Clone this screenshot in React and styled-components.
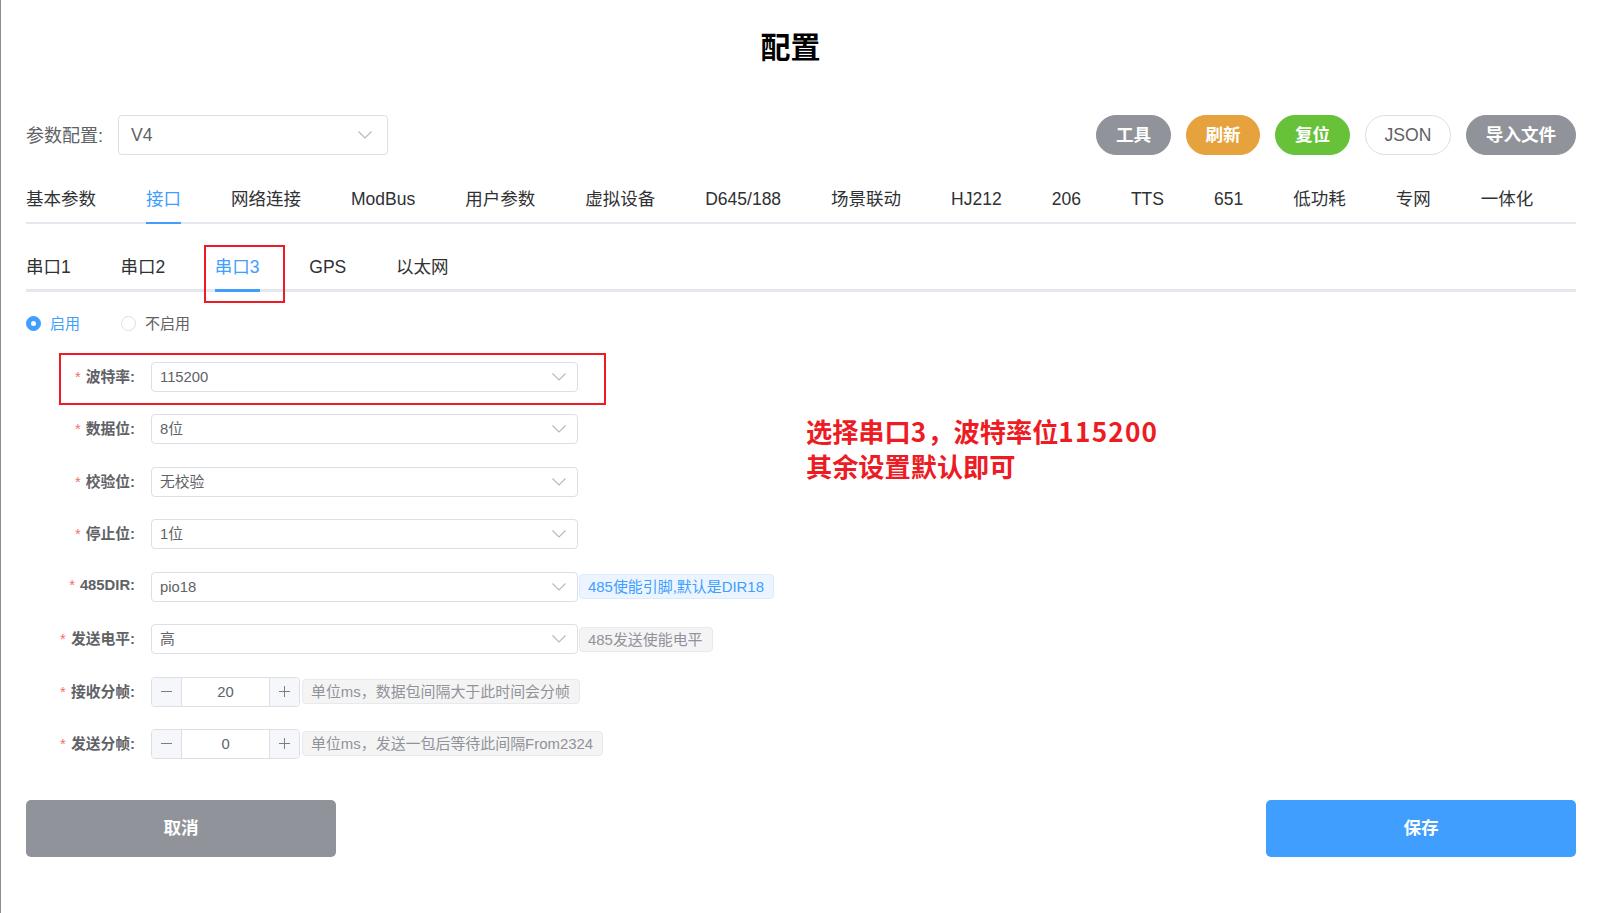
import React from "react";
import styled, { createGlobalStyle } from "styled-components";

const GlobalStyle = createGlobalStyle`
  html, body {
    margin: 0;
    padding: 0;
    background: #fff;
  }
  body {
    font-family: "Liberation Sans", "Noto Sans CJK SC", sans-serif;
    overflow: hidden;
  }
  * {
    box-sizing: border-box;
  }
`;

const Page = styled.div`
  position: relative;
  height: 913px;
  padding: 0 25px;
  border-left: 1px solid #8a8d92;
  background: #fff;
`;

const Title = styled.h1`
  margin: 0;
  height: 94px;
  padding-right: 21px;
  font-size: 30px;
  line-height: 96px;
  font-weight: 700;
  text-align: center;
  color: #000;
`;

const Toolbar = styled.div`
  display: flex;
  align-items: center;
  justify-content: space-between;
  margin-top: 21px;
  height: 40px;
`;

const ConfigPicker = styled.div`
  display: flex;
  align-items: center;
  gap: 15px;
  font-size: 18px;
  color: #606266;
`;

const PickerLabel = styled.span`
  padding-bottom: 3px;
`;

const ActionGroup = styled.div`
  display: flex;
  gap: 15px;
`;

const PillButton = styled.button`
  width: ${(p) => p.$width}px;
  height: 40px;
  padding: 0 0 ${(p) => p.$pad ?? 3}px;
  border: 1px solid ${(p) => p.$border || p.$bg};
  border-radius: 20px;
  background: ${(p) => p.$bg};
  color: ${(p) => p.$color || "#fff"};
  font: ${(p) => p.$weight || 700} 17.6px "Liberation Sans", "Noto Sans CJK SC", sans-serif;
`;

const SelectBox = styled.div`
  display: flex;
  align-items: center;
  justify-content: space-between;
  width: ${(p) => (p.$large ? 270 : 427)}px;
  height: ${(p) => (p.$large ? 40 : 30)}px;
  padding: 0 ${(p) => (p.$large ? 15 : 11)}px 0 ${(p) => (p.$large ? 12 : 8)}px;
  border: 1px solid #dcdfe6;
  border-radius: 4px;
  background: #fff;
  color: #606266;
  font-size: ${(p) => (p.$large ? 17.6 : 14.8)}px;
`;

const SelectValue = styled.span`
  padding-bottom: ${(p) => (p.$cjk ? 3 : 0)}px;
`;

const Chevron = styled.svg`
  width: 14px;
  height: 8px;
  fill: none;
  stroke: #b4b8c0;
  stroke-width: 1.1;
  flex-shrink: 0;
`;

const MainTabs = styled.div`
  display: flex;
  gap: 50px;
  margin-top: 22px;
  height: 47px;
  border-bottom: 2px solid #e4e7ed;
`;

const MainTab = styled.div`
  height: 47px;
  border-bottom: 2px solid ${(p) => (p.$active ? "#409eff" : "transparent")};
  font-size: 17.5px;
  line-height: 45px;
  white-space: nowrap;
  color: ${(p) => (p.$active ? "#409eff" : "#303133")};
`;

const SubTabs = styled.div`
  display: flex;
  gap: 49.7px;
  margin-top: 21px;
  height: 47px;
  border-bottom: 3px solid #e4e7ed;
`;

const SubTab = styled.div`
  position: relative;
  height: 47px;
  border-bottom: 3px solid ${(p) => (p.$active ? "#409eff" : "transparent")};
  font-size: 17.5px;
  line-height: 44px;
  white-space: nowrap;
  color: ${(p) => (p.$active ? "#409eff" : "#303133")};
`;

const TabMark = styled.span`
  position: absolute;
  left: -11px;
  top: 0;
  width: 81px;
  height: 58px;
  border: 2px solid #ed1c24;
`;

const RadioRow = styled.div`
  display: flex;
  align-items: center;
  gap: 41px;
  margin-top: 23px;
  height: 17px;
`;

const RadioLabel = styled.label`
  display: flex;
  align-items: center;
  gap: 9px;
  font-size: 15px;
  line-height: 15px;
  color: ${(p) => (p.$checked ? "#409eff" : "#606266")};
`;

const RadioDot = styled.span`
  display: flex;
  align-items: center;
  justify-content: center;
  width: 15px;
  height: 15px;
  border-radius: 50%;
  border: 1px solid ${(p) => (p.$checked ? "#409eff" : "#dcdfe6")};
  background: ${(p) => (p.$checked ? "#409eff" : "#fff")};

  &::after {
    content: "";
    width: 5px;
    height: 5px;
    border-radius: 50%;
    background: #fff;
  }
`;

const Form = styled.div`
  position: relative;
  display: flex;
  flex-direction: column;
  gap: 22.43px;
  margin-top: 30px;
`;

const FormRow = styled.div`
  position: relative;
  display: flex;
  align-items: center;
  height: 30px;
`;

const RowMark = styled.span`
  position: absolute;
  left: 33px;
  top: -9px;
  width: 547px;
  height: 52px;
  border: 2px solid #ed1c24;
`;

const FieldLabel = styled.label`
  width: 125px;
  padding: 0 16px 3px 0;
  text-align: right;
  white-space: nowrap;
  font-size: 14.8px;
  font-weight: 700;
  color: #606266;

  &::before {
    content: "*";
    margin-right: 5px;
    font-weight: 400;
    color: #f56c6c;
  }
`;

const Tag = styled.span`
  display: inline-flex;
  align-items: center;
  height: 25px;
  margin-left: ${(p) => p.$offset || 1}px;
  padding: 0 9px 2px 8px;
  border: 1px solid ${(p) => (p.$primary ? "#d9ecff" : "#e9e9eb")};
  border-radius: 4px;
  background: ${(p) => (p.$primary ? "#ecf5ff" : "#f4f4f5")};
  color: ${(p) => (p.$primary ? "#409eff" : "#909399")};
  font-size: 14.95px;
  white-space: nowrap;
`;

const Stepper = styled.div`
  display: flex;
  width: 149px;
  height: 30px;
  border: 1px solid #dcdfe6;
  border-radius: 4px;
  overflow: hidden;
`;

const StepButton = styled.span`
  display: flex;
  align-items: center;
  justify-content: center;
  width: 30px;
  background: #f5f7fa;
  border-${(p) => (p.$side === "left" ? "right" : "left")}: 1px solid #dcdfe6;
`;

const StepValue = styled.span`
  flex: 1;
  text-align: center;
  font-size: 14.8px;
  line-height: 28px;
  color: #606266;
`;

const StepIcon = styled.svg`
  width: 13px;
  height: 13px;
  stroke: #7a7d84;
  stroke-width: 1;
`;

const Annotation = styled.div`
  position: absolute;
  left: 780px;
  top: 52px;
  font-family: "Noto Sans CJK SC", sans-serif;
  font-size: 26.2px;
  line-height: 34.5px;
  font-weight: 700;
  color: #ed1c24;
  white-space: nowrap;
`;

const Digits = styled.span`
  letter-spacing: 1.2px;
`;

const Footer = styled.div`
  display: flex;
  justify-content: space-between;
  margin-top: 41px;
`;

const FooterButton = styled.button`
  width: 310px;
  height: 57px;
  padding: 0 0 3px;
  border: none;
  border-radius: 5px;
  background: ${(p) => p.$bg};
  color: #fff;
  font: 700 17.6px "Liberation Sans", "Noto Sans CJK SC", sans-serif;
`;

const actions = [
  { label: "工具", width: 75, bg: "#909399" },
  { label: "刷新", width: 74, bg: "#e6a23c" },
  { label: "复位", width: 75, bg: "#67c23a" },
  { label: "JSON", width: 86, bg: "#fff", border: "#dcdfe6", color: "#606266", weight: 400, pad: 0 },
  { label: "导入文件", width: 110, bg: "#909399" },
];

const mainTabs = ["基本参数", "接口", "网络连接", "ModBus", "用户参数", "虚拟设备", "D645/188", "场景联动", "HJ212", "206", "TTS", "651", "低功耗", "专网", "一体化"];
const subTabs = ["串口1", "串口2", "串口3", "GPS", "以太网"];

const fields = [
  { label: "波特率:", value: "115200", mark: true },
  { label: "数据位:", value: "8位", cjk: true },
  { label: "校验位:", value: "无校验", cjk: true },
  { label: "停止位:", value: "1位", cjk: true },
  { label: "485DIR:", value: "pio18", tag: "485使能引脚,默认是DIR18", primary: true },
  { label: "发送电平:", value: "高", cjk: true, tag: "485发送使能电平" },
  { label: "接收分帧:", step: 20, tag: "单位ms，数据包间隔大于此时间会分帧" },
  { label: "发送分帧:", step: 0, tag: "单位ms，发送一包后等待此间隔From2324" },
];

const ArrowDown = () => (
  <Chevron viewBox="0 0 14 8">
    <path d="M0.5 0.5 L7 7 L13.5 0.5" />
  </Chevron>
);

const NumberField = ({ value }) => (
  <Stepper>
    <StepButton $side="left">
      <StepIcon viewBox="0 0 13 13">
        <path d="M1 6.5 H12" />
      </StepIcon>
    </StepButton>
    <StepValue>{value}</StepValue>
    <StepButton $side="right">
      <StepIcon viewBox="0 0 13 13">
        <path d="M1 6.5 H12 M6.5 1 V12" />
      </StepIcon>
    </StepButton>
  </Stepper>
);

const App = () => {
  return (
    <Page>
      <GlobalStyle />
      <Title>配置</Title>

      <Toolbar>
        <ConfigPicker>
          <PickerLabel>参数配置:</PickerLabel>
          <SelectBox $large>
            <SelectValue>V4</SelectValue>
            <ArrowDown />
          </SelectBox>
        </ConfigPicker>
        <ActionGroup>
          {actions.map((a) => (
            <PillButton key={a.label} $width={a.width} $bg={a.bg} $border={a.border} $color={a.color} $weight={a.weight} $pad={a.pad}>
              {a.label}
            </PillButton>
          ))}
        </ActionGroup>
      </Toolbar>

      <MainTabs>
        {mainTabs.map((t) => (
          <MainTab key={t} $active={t === "接口"}>
            {t}
          </MainTab>
        ))}
      </MainTabs>

      <SubTabs>
        {subTabs.map((t) => (
          <SubTab key={t} $active={t === "串口3"}>
            {t}
            {t === "串口3" && <TabMark />}
          </SubTab>
        ))}
      </SubTabs>

      <RadioRow>
        <RadioLabel $checked>
          <RadioDot $checked />
          <span>启用</span>
        </RadioLabel>
        <RadioLabel>
          <RadioDot />
          <span>不启用</span>
        </RadioLabel>
      </RadioRow>

      <Form>
        {fields.map((f) => (
          <FormRow key={f.label}>
            {f.mark && <RowMark />}
            <FieldLabel>{f.label}</FieldLabel>
            {f.step !== undefined ? (
              <NumberField value={f.step} />
            ) : (
              <SelectBox>
                <SelectValue $cjk={f.cjk}>{f.value}</SelectValue>
                <ArrowDown />
              </SelectBox>
            )}
            {f.tag && (
              <Tag $primary={f.primary} $offset={f.step !== undefined ? 2 : 1}>
                {f.tag}
              </Tag>
            )}
          </FormRow>
        ))}
        <Annotation>
          选择串口<Digits>3</Digits>，波特率位<Digits>115200</Digits>
          <br />
          其余设置默认即可
        </Annotation>
      </Form>

      <Footer>
        <FooterButton $bg="#909399">取消</FooterButton>
        <FooterButton $bg="#409eff">保存</FooterButton>
      </Footer>
    </Page>
  );
};

export default App;
